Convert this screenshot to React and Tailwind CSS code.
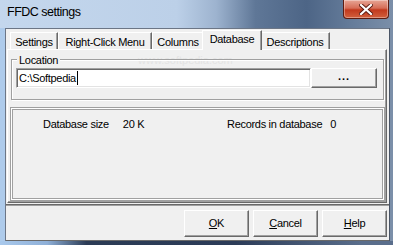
const raised = "border-t border-l border-white border-r border-b border-r-[#696969] border-b-[#696969] shadow-[inset_-1px_-1px_0_#a0a0a0]";

function Tab({ label, active, width }) {
  if (active) {
    return (
      <div
        className={`relative z-10 -mb-px -mx-[2px] h-[20px] pt-[2px] bg-[#f0f0f0] border-t border-l border-white border-r border-r-[#696969] shadow-[inset_-1px_0_0_#a0a0a0] text-center`}
        style={{ width: width + 4 }}
      >
        {label}
      </div>
    );
  }
  return (
    <div
      className="h-[17px] pt-[3px] bg-[#f0f0f0] border-t border-l border-white border-r border-r-[#696969] shadow-[inset_-1px_0_0_#a0a0a0] text-center"
      style={{ width }}
    >
      {label}
    </div>
  );
}

export default function App() {
  const tabs = [
    { label: "Settings", width: 48 },
    { label: "Right-Click Menu", width: 94 },
    { label: "Columns", width: 52 },
    { label: "Database", width: 56, active: true },
    { label: "Descriptions", width: 70 },
  ];

  return (
    <div className="w-[393px] h-[245px] flex flex-col overflow-hidden relative font-['Liberation_Sans',Arial,sans-serif] text-[11px] leading-[13px] tracking-[-0.3px] text-black">
      {/* title bar */}
      <div className="h-[28px] pt-[5px] pl-[7px] bg-[linear-gradient(90deg,#c4d7ed_0%,#bcd0e8_45%,#9db3cf_55%,#5f7797_65%,#4d6586_78%,#667d9b_90%,#7b8fa9_100%)]">
        <span className="text-[12.5px] leading-[14px] tracking-[-0.5px]">FFDC settings</span>
      </div>
      <div className="absolute top-0 left-[343px] w-[46px] h-[19px] rounded-b-[4px] border border-t-0 border-[#5e1c10] bg-[linear-gradient(180deg,#e7a696_0%,#d66d57_45%,#c2391d_55%,#d2603d_100%)] shadow-[inset_0_0_0_1px_rgba(255,255,255,0.35)] flex items-center justify-center">
        <svg width="14" height="11" viewBox="0 0 14 11">
          <path d="M2 1 L12 10 M12 1 L2 10" stroke="#5a1a10" strokeWidth="4" strokeLinecap="square" />
          <path d="M2 1 L12 10 M12 1 L2 10" stroke="#ffffff" strokeWidth="2.2" strokeLinecap="square" />
        </svg>
      </div>

      <div className="flex flex-1">
        <div className="w-[5px] bg-[#aecbeb]" />

        {/* client */}
        <div className="flex-1 flex flex-col bg-[#f0f0f0] border-t border-l border-[#6c7686]">
          <div className="pt-[1px] pl-[4px] h-[20px] flex items-end">
            {tabs.map((t) => (
              <Tab key={t.label} {...t} />
            ))}
          </div>

          {/* tab panel */}
          <div className="ml-[1px] mr-[2px] h-[154px] border-t border-l border-white border-r border-b border-r-[#696969] border-b-[#696969] shadow-[inset_-1px_-1px_0_#a0a0a0] relative">
            <span className="absolute left-[130px] top-[4px] text-[#e4e4e4] tracking-[0px]">www.softpedia.com</span>

            <div className="relative mt-[9px] ml-[3px] w-[373px] h-[41px] border border-[#a0a0a0] shadow-[inset_1px_1px_0_#fff,1px_1px_0_#fff] pt-[8px] pl-[4px] flex">
              <span className="absolute -top-[6px] left-[5px] px-[2px] bg-[#f0f0f0]">Location</span>
              <div className="w-[295px] h-[20px] bg-white border border-t-[#a0a0a0] border-l-[#a0a0a0] border-r-white border-b-white shadow-[inset_1px_1px_0_#696969,inset_-1px_-1px_0_#e3e3e3] pt-[3px] pl-[2px] flex items-start">
                <span>C:\Softpedia</span>
                <span className="w-px h-[14px] -mt-[1px] bg-black ml-[1px]" />
              </div>
              <div className={`w-[66px] h-[20px] bg-[#f0f0f0] ${raised} flex items-center justify-center font-bold tracking-[1px] pb-[3px]`}>
                ...
              </div>
            </div>

            <div className="mt-[7px] ml-[2px] w-[375px] h-[94px] border border-[#a0a0a0] shadow-[inset_0_0_0_1px_#fff,inset_0_0_0_2px_#a0a0a0] pt-[10px] pl-[32px] flex">
              <div className="w-[184px] flex">
                <span>Database size</span>
                <span className="ml-[14px]">20 K</span>
              </div>
              <span>Records in database</span>
              <span className="ml-[8px]">0</span>
            </div>
          </div>

          {/* buttons */}
          <div className="mt-[1px] flex-1 border-t border-b border-[#696969] shadow-[inset_0_1px_0_#a0a0a0] pt-[5px] pr-[2px] flex justify-end items-start gap-[4px]">
            <div className={`w-[65px] h-[27px] ${raised} flex items-center justify-center`}>
              <span><span className="underline">O</span>K</span>
            </div>
            <div className={`w-[65px] h-[27px] ${raised} flex items-center justify-center`}>
              <span><span className="underline">C</span>ancel</span>
            </div>
            <div className={`w-[65px] h-[27px] ${raised} flex items-center justify-center`}>
              <span><span className="underline">H</span>elp</span>
            </div>
          </div>
        </div>

        <div className="w-[4px] bg-[#7b8fa9] border-l border-[#4a5566]" />
      </div>
      <div className="h-[4px] bg-[linear-gradient(90deg,#a9c9ec_0%,#8fb0d8_12%,#2b3b55_22%,#2c3c58_60%,#5a6e8c_92%)]" />
    </div>
  );
}
